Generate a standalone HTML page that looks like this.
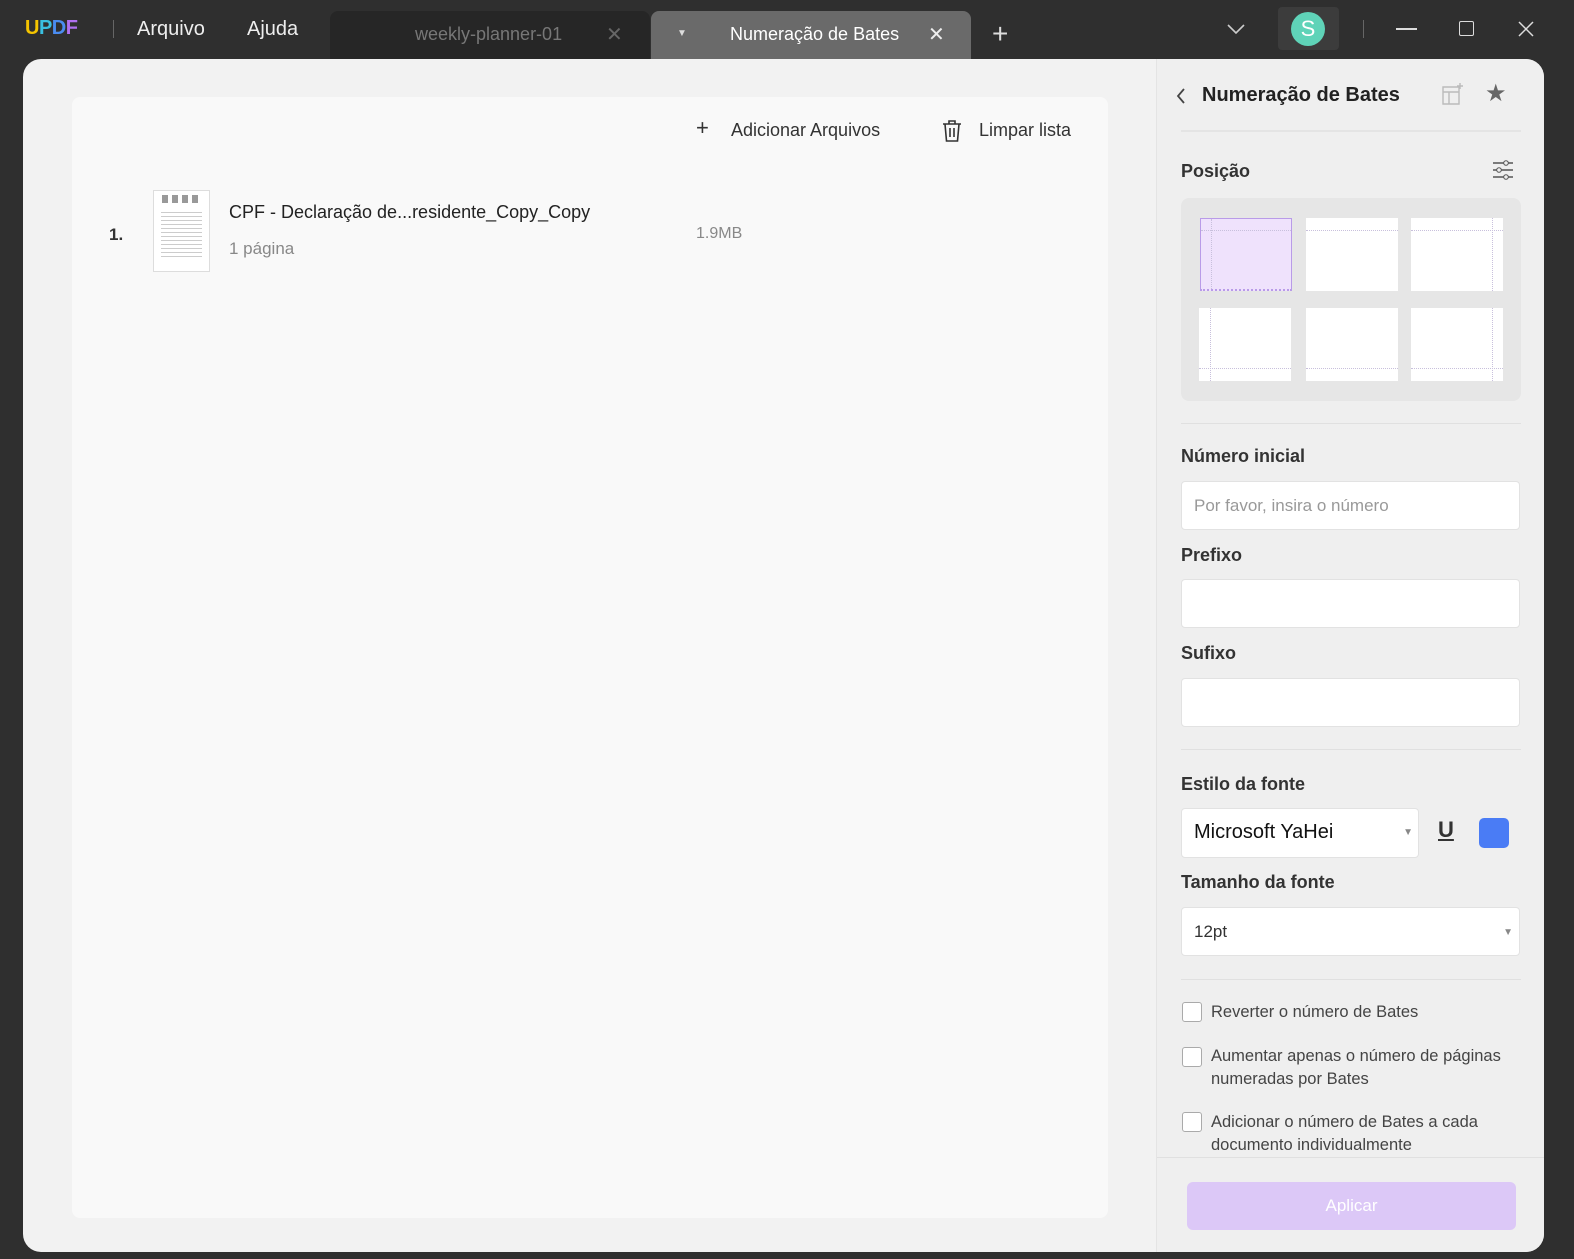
<!DOCTYPE html>
<html><head><meta charset="utf-8"><style>
*{box-sizing:border-box;margin:0;padding:0}
body{width:1574px;height:1259px;background:#2f2f2f;font-family:"Liberation Sans",sans-serif;position:relative;overflow:hidden;color:#222}
.a{position:absolute}
.tb{color:#eee;font-size:20px}
.main{left:23px;top:59px;width:1521px;height:1193px;background:#f2f2f2;border-radius:18px;overflow:hidden}
.card{left:49px;top:38px;width:1036px;height:1121px;background:#f9f9f9;border-radius:8px}
.rp{left:1133px;top:0;width:388px;height:1193px;background:#efefef;border-left:1px solid #e4e4e4}
.lbl{font-weight:bold;font-size:18px;color:#333}
.inp{background:#fff;border:1px solid #e2e2e2;border-radius:4px;width:339px;height:49px}
.cell{width:92px;height:73px;background:#fff}
.cell i{position:absolute;display:block}
.h{left:0;right:0;border-top:1px dotted #c8c0dc;height:0}
.v{top:0;bottom:0;border-left:1px dotted #c8c0dc;width:0}
.cb{width:20px;height:20px;border:1.5px solid #aaa;border-radius:3px;background:#fff}
.ct{font-size:16.5px;color:#444;line-height:23px}
</style></head><body>
<div class="a" style="left:25px;top:17px;font-weight:900;font-size:20px;letter-spacing:-0.5px"><span style="color:#f5c400">U</span><span style="color:#3ac0e0">P</span><span style="color:#4a8cf0">D</span><span style="color:#b070f0">F</span></div>
<div class="a" style="left:113px;top:20px;width:1px;height:18px;background:#666"></div>
<div class="a tb" style="left:137px;top:18px">Arquivo</div>
<div class="a tb" style="left:247px;top:18px">Ajuda</div>
<div class="a" style="left:330px;top:11px;width:320px;height:48px;background:#262626;border-radius:8px 8px 0 0"></div>
<div class="a" style="left:415px;top:24px;font-size:18px;color:#777">weekly-planner-01</div>
<div class="a" style="left:606px;top:22px;font-size:20px;color:#666">✕</div>
<div class="a" style="left:651px;top:11px;width:320px;height:48px;background:#6a6a6a;border-radius:8px 8px 0 0"></div>
<div class="a" style="left:677px;top:28px;font-size:10px;color:#ddd">▼</div>
<div class="a" style="left:730px;top:24px;font-size:18px;color:#fff">Numeração de Bates</div>
<div class="a" style="left:928px;top:22px;font-size:20px;color:#eee">✕</div>
<div class="a" style="left:992px;top:18px;font-size:28px;color:#ddd;font-weight:300">+</div>
<svg class="a" style="left:1226px;top:22px" width="20" height="14"><path d="M2 3l8 8 8-8" fill="none" stroke="#ccc" stroke-width="1.6"/></svg>
<div class="a" style="left:1278px;top:7px;width:61px;height:43px;background:#3c3c3c;border-radius:4px"></div>
<div class="a" style="left:1291px;top:12px;width:34px;height:34px;border-radius:50%;background:#5fd3b8;color:#fff;font-size:22px;text-align:center;line-height:34px">S</div>
<div class="a" style="left:1363px;top:20px;width:1px;height:18px;background:#666"></div>
<div class="a" style="left:1396px;top:28px;width:21px;height:1.5px;background:#ddd"></div>
<div class="a" style="left:1459px;top:21px;width:15px;height:15px;border:1.5px solid #ddd;border-radius:2px"></div>
<svg class="a" style="left:1517px;top:20px" width="18" height="18"><path d="M2 2l14 14M16 2L2 16" stroke="#ddd" stroke-width="1.5"/></svg>

<div class="a main">
 <div class="a card">
  <div class="a" style="left:624px;top:18px;font-size:22px;color:#333">+</div>
  <div class="a" style="left:659px;top:23px;font-size:18px;color:#333">Adicionar Arquivos</div>
  <svg class="a" style="left:869px;top:22px" width="22" height="24"><path d="M2 5h18M8 5V2h6v3M4 5l1.5 17h11L18 5M9 9v9M13 9v9" fill="none" stroke="#333" stroke-width="1.6"/></svg>
  <div class="a" style="left:907px;top:23px;font-size:18px;color:#333">Limpar lista</div>
  <div class="a" style="left:37px;top:128px;font-size:17px;font-weight:bold;color:#333">1.</div>
  <div class="a" style="left:81px;top:93px;width:57px;height:82px;background:#fff;border:1px solid #ddd">
   <div style="margin:4px 8px 0;height:8px;background:repeating-linear-gradient(90deg,#999 0 6px,#fff 6px 10px)"></div>
   <div style="margin:6px 7px;height:50px;background:repeating-linear-gradient(#fff 0 3px,#ccc 3px 4px)"></div></div>
  <div class="a" style="left:157px;top:105px;font-size:18px;color:#222">CPF - Declaração de...residente_Copy_Copy</div>
  <div class="a" style="left:157px;top:142px;font-size:17px;color:#888">1 página</div>
  <div class="a" style="left:624px;top:128px;font-size:16px;color:#888">1.9MB</div>
 </div>
 <div class="a rp">
  <svg class="a" style="left:18px;top:28px" width="12" height="18"><path d="M9 2L3 9l6 7" fill="none" stroke="#444" stroke-width="1.8"/></svg>
  <div class="a" style="left:45px;top:25px;font-size:20px;font-weight:bold;color:#222">Numeração de Bates</div>
  <svg class="a" style="left:284px;top:23px" width="24" height="24"><path d="M2 5h16v17H2zM2 10h16M8 10v12M19 1v6M16 4h6" fill="none" stroke="#bbb" stroke-width="1.4"/></svg>
  <div class="a" style="left:328px;top:20px;font-size:24px;color:#666">★</div>
  <div class="a" style="left:24px;top:71px;width:340px;height:2px;background:#e4e4e4"></div>
  <div class="a lbl" style="left:24px;top:102px">Posição</div>
  <svg class="a" style="left:335px;top:100px" width="22" height="22"><path d="M1 4h20M1 11h20M1 18h20" stroke="#555" stroke-width="1.4"/><circle cx="14" cy="4" r="2.3" fill="#efefef" stroke="#555"/><circle cx="7" cy="11" r="2.3" fill="#efefef" stroke="#555"/><circle cx="14" cy="18" r="2.3" fill="#efefef" stroke="#555"/></svg>
  <div class="a" style="left:24px;top:139px;width:340px;height:203px;background:#e6e6e6;border-radius:8px"></div>
  <div class="a cell" style="left:43px;top:159px;background:#efe2fc;border:1px solid #b99be8;border-bottom:2px dotted #b99be8"><i class="h" style="top:11px"></i><i class="v" style="left:10px"></i></div>
  <div class="a cell" style="left:149px;top:159px"><i class="h" style="top:12px"></i></div>
  <div class="a cell" style="left:254px;top:159px"><i class="h" style="top:12px"></i><i class="v" style="right:10px"></i></div>
  <div class="a cell" style="left:42px;top:249px"><i class="h" style="bottom:12px"></i><i class="v" style="left:11px"></i></div>
  <div class="a cell" style="left:149px;top:249px"><i class="h" style="bottom:12px"></i></div>
  <div class="a cell" style="left:254px;top:249px"><i class="h" style="bottom:12px"></i><i class="v" style="right:10px"></i></div>
  <div class="a" style="left:24px;top:364px;width:340px;height:1px;background:#e0e0e0"></div>
  <div class="a lbl" style="left:24px;top:387px">Número inicial</div>
  <div class="a inp" style="left:24px;top:422px"><div style="padding:14px 12px;font-size:17px;color:#999">Por favor, insira o número</div></div>
  <div class="a lbl" style="left:24px;top:486px">Prefixo</div>
  <div class="a inp" style="left:24px;top:520px"></div>
  <div class="a lbl" style="left:24px;top:584px">Sufixo</div>
  <div class="a inp" style="left:24px;top:619px"></div>
  <div class="a" style="left:24px;top:690px;width:340px;height:1px;background:#e0e0e0"></div>
  <div class="a lbl" style="left:24px;top:715px">Estilo da fonte</div>
  <div class="a inp" style="left:24px;top:749px;width:238px;height:50px"><div style="padding:12px 12px;font-size:20px;color:#111">Microsoft YaHei</div><div class="a" style="right:5px;top:18px;font-size:10px;color:#888">▼</div></div>
  <div class="a" style="left:281px;top:758px;font-size:22px;font-weight:bold;color:#333;text-decoration:underline">U</div>
  <div class="a" style="left:322px;top:759px;width:30px;height:30px;background:#4a7cf5;border-radius:5px"></div>
  <div class="a lbl" style="left:24px;top:813px">Tamanho da fonte</div>
  <div class="a inp" style="left:24px;top:848px;height:49px"><div style="padding:14px 12px;font-size:17px;color:#333">12pt</div><div class="a" style="right:6px;top:19px;font-size:10px;color:#888">▼</div></div>
  <div class="a" style="left:24px;top:920px;width:340px;height:1px;background:#e0e0e0"></div>
  <div class="a cb" style="left:25px;top:943px"></div><div class="a ct" style="left:54px;top:942px">Reverter o número de Bates</div>
  <div class="a cb" style="left:25px;top:988px"></div><div class="a ct" style="left:54px;top:986px">Aumentar apenas o número de páginas<br>numeradas por Bates</div>
  <div class="a cb" style="left:25px;top:1053px"></div><div class="a ct" style="left:54px;top:1052px">Adicionar o número de Bates a cada<br>documento individualmente</div>
  <div class="a" style="left:0;top:1098px;width:388px;height:1px;background:#e0e0e0"></div>
  <div class="a" style="left:30px;top:1123px;width:329px;height:48px;background:#dcc8f7;border-radius:6px;color:#fff;font-size:17px;text-align:center;line-height:48px">Aplicar</div>
 </div>
</div>
</body></html>
